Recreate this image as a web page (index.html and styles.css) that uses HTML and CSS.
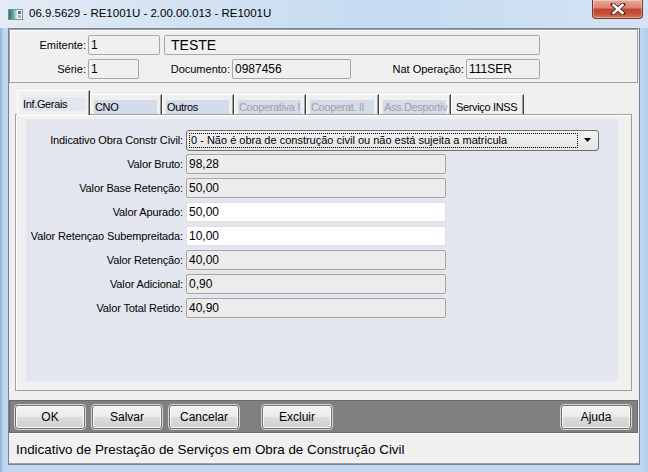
FILE: index.html
```html
<!DOCTYPE html>
<html>
<head>
<meta charset="utf-8">
<link rel="stylesheet" href="styles.css">
</head>
<body>
<div class="window">
  <div class="titlebar">
    <svg class="appicon" width="15" height="11" viewBox="0 0 15 11">
      <defs>
        <linearGradient id="g1" x1="0" y1="0" x2="1" y2="0">
          <stop offset="0" stop-color="#2f6f78"/>
          <stop offset="0.5" stop-color="#5fa79a"/>
          <stop offset="1" stop-color="#d8e6ea"/>
        </linearGradient>
      </defs>
      <rect x="0.5" y="0.5" width="14" height="10" fill="#f4f6f8" stroke="#7d8b98"/>
      <rect x="1" y="1" width="8" height="9" fill="url(#g1)"/>
      <rect x="10" y="2" width="3" height="3" fill="#3d7fb0"/>
      <rect x="10" y="6" width="3" height="3" fill="#9bb8d0"/>
    </svg>
    <span class="title">06.9.5629 - RE1001U - 2.00.00.013 - RE1001U</span>
    <div class="closebtn">
      <svg width="16" height="12" viewBox="0 0 16 12">
        <path d="M3 1.5 L13 10.5 M13 1.5 L3 10.5" stroke="#4b2a22" stroke-width="4.2" stroke-linecap="square"/>
        <path d="M3.5 2 L12.5 10 M12.5 2 L3.5 10" stroke="#ffffff" stroke-width="2.4" stroke-linecap="square"/>
      </svg>
    </div>
  </div>
  <div class="frame">
    <div class="client">
      <div class="header">
        <div class="hrow">
          <span class="hl lw77">Emitente:</span>
          <div class="tb ro w72">1</div>
          <div class="tb ro big w376">TESTE</div>
        </div>
        <div class="hrow">
          <span class="hl lw77">Série:</span>
          <div class="tb ro w51">1</div>
          <span class="hl lw93">Documento:</span>
          <div class="tb ro w119">0987456</div>
          <span class="hl lw115">Nat Operação:</span>
          <div class="tb ro w74">111SER</div>
        </div>
      </div>

      <div class="tabs">
        <div class="tab active"><span class="tl">Inf.Gerais</span></div>
        <div class="tab"><span class="tl">CNO</span></div>
        <div class="tab"><span class="tl">Outros</span></div>
        <div class="tab disabled"><span class="tl">Cooperativa I</span></div>
        <div class="tab disabled w74t"><span class="tl">Cooperat. II</span></div>
        <div class="tab disabled"><span class="tl">Ass.Desportiv</span></div>
        <div class="tab plain w74t"><span class="tl">Serviço INSS</span></div>
      </div>

      <div class="pane">
        <div class="panel">
          <div class="form">
            <span class="fl">Indicativo Obra Constr Civil:</span>
            <div class="combo">
              <span class="focus">0 - Não é obra de construção civil ou não está sujeita a matricula</span>
              <span class="arrow"><svg width="7" height="4" viewBox="0 0 7 4"><path d="M0 0 H7 L3.5 4 Z" fill="#000"/></svg></span>
            </div>

            <span class="fl">Valor Bruto:</span>
            <div class="fi ro">98,28</div>

            <span class="fl">Valor Base Retenção:</span>
            <div class="fi ro">50,00</div>

            <span class="fl">Valor Apurado:</span>
            <div class="fi ed">50,00</div>

            <span class="fl">Valor Retençao Subempreitada:</span>
            <div class="fi ed">10,00</div>

            <span class="fl">Valor Retenção:</span>
            <div class="fi ro">40,00</div>

            <span class="fl">Valor Adicional:</span>
            <div class="fi ro">0,90</div>

            <span class="fl">Valor Total Retido:</span>
            <div class="fi ro">40,90</div>
          </div>
        </div>
      </div>

      <div class="buttons">
        <button class="btn">OK</button>
        <button class="btn">Salvar</button>
        <button class="btn">Cancelar</button>
        <button class="btn excluir">Excluir</button>
        <button class="btn ajuda">Ajuda</button>
      </div>

      <div class="status">Indicativo de Prestação de Serviços em Obra de Construção Civil</div>
    </div>
  </div>
</div>
</body>
</html>
```

FILE: styles.css
```css
* { box-sizing: border-box; }

html, body {
  margin: 0;
  padding: 0;
  width: 648px;
  height: 472px;
  overflow: hidden;
  font-family: "Liberation Sans", Arial, sans-serif;
  color: #000;
}

.window {
  width: 648px;
  height: 472px;
  display: flex;
  flex-direction: column;
  background: linear-gradient(to bottom, #d6e4f3 0px, #c3d7ee 28px, #bcd2ec 60%, #c6daf0 100%);
}

/* title bar */
.titlebar {
  height: 28px;
  flex: none;
  display: flex;
  align-items: flex-start;
  background: linear-gradient(to right, #e3ebf4 0%, #d2e2f3 30%, #c6dbf1 60%, #d4e3f3 100%);
}

.appicon {
  margin: 9px 0 0 8px;
  flex: none;
}

.title {
  margin: 7px 0 0 6px;
  font-size: 11.5px;
  color: #000;
  white-space: nowrap;
  flex: 1;
}

.closebtn {
  width: 51px;
  height: 19px;
  margin-right: 5px;
  border: 1px solid #6b3a31;
  border-top: none;
  border-radius: 0 0 4px 4px;
  background: linear-gradient(to bottom, #e9a99b 0%, #d88270 45%, #c0432b 50%, #c9533a 80%, #dc7a5a 100%);
  box-shadow: inset 0 0 0 1px rgba(255,255,255,0.35);
  display: flex;
  align-items: center;
  justify-content: center;
  flex: none;
}

/* frame */
.frame {
  flex: 1;
  display: flex;
  padding: 0 8px 7px 8px;
  background: linear-gradient(to right, #8fb3dd 0px, #c2d7ef 4px, #c2d7ef 640px, #b5cdea 648px);
}

.client {
  width: 632px;
  height: 437px;
  border: 1px solid #6f8299;
  background: #f0f0f0;
  display: flex;
  flex-direction: column;
}

/* header */
.header {
  width: 629px;
  height: 54px;
  border: 1px solid #a0a0a0;
  box-shadow: inset 1px 1px 0 #ffffff;
  padding: 5px 0 3px 0;
  display: flex;
  flex-direction: column;
  gap: 4px;
}

.hrow {
  display: flex;
  align-items: center;
  height: 20px;
}

.hl {
  font-size: 11px;
  text-align: right;
  padding-right: 2px;
  white-space: nowrap;
}
.lw77 { width: 78px; }
.lw93 { width: 93px; }
.lw115 { width: 115px; }

.tb {
  height: 20px;
  border: 1px solid #a8a8a8;
  border-radius: 2px;
  font-size: 12px;
  padding-left: 2px;
  display: flex;
  align-items: center;
  white-space: nowrap;
}
.tb.ro { background: #f0f0f0; }
.tb.big { font-size: 14px; padding-left: 6px; margin-left: 4px; }
.w72 { width: 72px; }
.w376 { width: 376px; }
.w51 { width: 51px; }
.w119 { width: 119px; }
.w74 { width: 74px; }

/* tabs */
.tabs {
  margin-top: 7px;
  height: 24px;
  display: flex;
  align-items: flex-end;
  padding-left: 8px;
  position: relative;
  z-index: 2;
}

.tab {
  width: 72px;
  height: 20px;
  border-left: 1px solid #ffffff;
  border-top: 1px solid #ffffff;
  border-right: 1px solid #404040;
  box-shadow: inset -1px 0 0 #a0a0a0;
  background: #f0f0f0;
  padding: 5px 4px 0 3px;
  font-size: 11px;
  letter-spacing: -0.35px;
}
.tab.w74t { width: 73px; }
.tab .tl {
  display: block;
  height: 14px;
  line-height: 14px;
  background: #d4dbea;
  padding-left: 1px;
  white-space: nowrap;
}
.tab.disabled .tl { color: #a2a2a2; }
.tab.plain .tl { background: transparent; }
.tab.active {
  width: 73px;
  height: 25px;
  margin-bottom: -1px;
  padding: 6px 4px 0 4px;
}
.tab.active .tl {
  background: #e3e6ee;
  height: 14px;
}

/* pane */
.pane {
  margin-left: 6px;
  width: 617px;
  height: 277px;
  border: 1px solid #a0a0a0;
  box-shadow: inset 1px 1px 0 #ffffff;
  padding: 4px 13px 9px 10px;
}

.panel {
  width: 592px;
  height: 262px;
  background: #e3e6ee;
  padding-top: 11px;
}

.form {
  display: grid;
  grid-template-columns: 158px auto;
  column-gap: 2px;
  row-gap: 4px;
  grid-auto-rows: 20px;
  align-items: center;
  justify-items: start;
}

.fl {
  justify-self: end;
  font-size: 11px;
  letter-spacing: -0.12px;
  white-space: nowrap;
  padding-right: 1px;
}

.fi {
  width: 260px;
  height: 20px;
  border: 1px solid;
  border-radius: 2px;
  font-size: 12px;
  padding-left: 2px;
  display: flex;
  align-items: center;
}
.fi.ro {
  background: #ececec;
  border-color: #a6a6a6;
}
.fi.ed {
  background: #ffffff;
  border-color: #dcdfe6;
}

.combo {
  width: 413px;
  height: 21px;
  border: 1px solid #707070;
  border-radius: 3px;
  background: linear-gradient(to bottom, #f2f2f2, #e6e6e6);
  display: flex;
  align-items: center;
  padding: 2px;
}
.combo .focus {
  flex: 1;
  height: 15px;
  border: 1px dotted #000;
  font-size: 11px;
  line-height: 13px;
  padding-left: 1px;
  white-space: nowrap;
  overflow: hidden;
}
.combo .arrow {
  width: 18px;
  display: flex;
  justify-content: center;
  align-items: center;
}
.combo .arrow svg { display: block; }

/* buttons */
.buttons {
  margin-top: 9px;
  width: 629px;
  height: 33px;
  background: #808080;
  border: 1px solid #6a6a6a;
  padding: 4px 6px 0 5px;
  display: flex;
  align-items: flex-start;
  gap: 7px;
}

.btn {
  width: 70px;
  height: 24px;
  font-family: "Liberation Sans", Arial, sans-serif;
  font-size: 12px;
  color: #000;
  border: 1px solid #707070;
  border-radius: 3px;
  background: linear-gradient(to bottom, #f4f4f4 0%, #ebebeb 48%, #dddddd 52%, #cfcfcf 100%);
  box-shadow: inset 0 0 0 1px #fcfcfc;
  padding: 0;
  outline: 1px solid #d8d8d8;
}
.btn.excluir { margin-left: 16px; }
.btn.ajuda { margin-left: auto; }

/* status */
.status {
  height: 31px;
  border-top: 1px solid #ffffff;
  border-bottom: 1px solid #a0a0a0;
  font-size: 13.4px;
  padding-left: 7px;
  display: flex;
  align-items: center;
  padding-top: 2px;
}
```
